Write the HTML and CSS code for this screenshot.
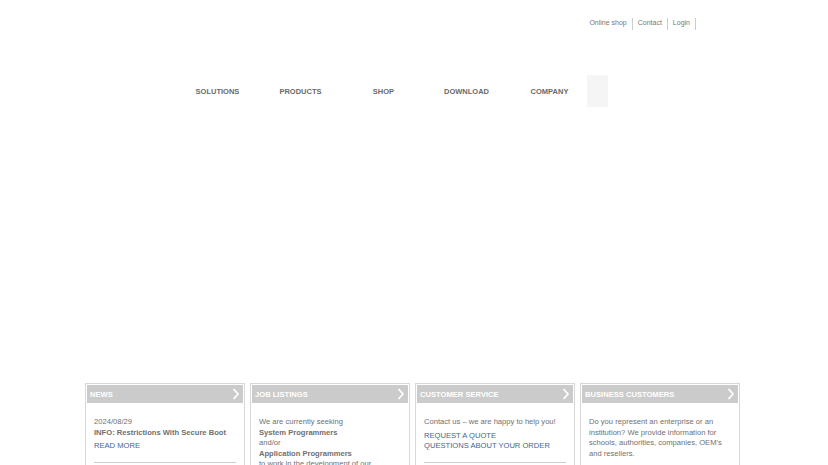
FILE: index.html
```html
<!DOCTYPE html>
<html lang="en">
<head>
    <meta charset="UTF-8">
    <meta name="viewport" content="width=device-width, initial-scale=1.0">
    <title>Home</title>
    <link rel="stylesheet" href="styles.css">
</head>
<body>
    <div class="page">
        <div class="toplinks">
            <a href="#">Online shop</a>
            <a href="#">Contact</a>
            <a href="#">Login</a>
        </div>

        <nav class="mainnav">
            <a href="#">SOLUTIONS</a>
            <a href="#">PRODUCTS</a>
            <a href="#">SHOP</a>
            <a href="#">DOWNLOAD</a>
            <a href="#">COMPANY</a>
            <div class="searchbox"></div>
        </nav>

        <div class="hero"></div>

        <div class="boxes">
            <div class="box">
                <div class="box-head">NEWS
                    <svg class="chev" width="8" height="12" viewBox="0 0 8 12"><polyline points="1.5,1 6,6 1.5,11" fill="none" stroke="#fff" stroke-width="1.8"/></svg>
                </div>
                <div class="box-body">
                    <p>2024/08/29</p>
                    <p class="strong">INFO: Restrictions With Secure Boot</p>
                    <p class="more"><a href="#">READ MORE</a></p>
                    <hr>
                </div>
            </div>
            <div class="box">
                <div class="box-head">JOB LISTINGS
                    <svg class="chev" width="8" height="12" viewBox="0 0 8 12"><polyline points="1.5,1 6,6 1.5,11" fill="none" stroke="#fff" stroke-width="1.8"/></svg>
                </div>
                <div class="box-body">
                    <p>We are currently seeking</p>
                    <p class="strong">System Programmers</p>
                    <p>and/or</p>
                    <p class="strong">Application Programmers</p>
                    <p>to work in the development of our</p>
                </div>
            </div>
            <div class="box">
                <div class="box-head">CUSTOMER SERVICE
                    <svg class="chev" width="8" height="12" viewBox="0 0 8 12"><polyline points="1.5,1 6,6 1.5,11" fill="none" stroke="#fff" stroke-width="1.8"/></svg>
                </div>
                <div class="box-body">
                    <p>Contact us &ndash; we are happy to help you!</p>
                    <p class="links"><a href="#">REQUEST A QUOTE</a><br><a href="#">QUESTIONS ABOUT YOUR ORDER</a></p>
                    <hr>
                </div>
            </div>
            <div class="box">
                <div class="box-head">BUSINESS CUSTOMERS
                    <svg class="chev" width="8" height="12" viewBox="0 0 8 12"><polyline points="1.5,1 6,6 1.5,11" fill="none" stroke="#fff" stroke-width="1.8"/></svg>
                </div>
                <div class="box-body">
                    <p>Do you represent an enterprise or an institution? We provide information for schools, authorities, companies, OEM's and resellers.</p>
                </div>
            </div>
        </div>
    </div>
</body>
</html>
```

FILE: styles.css
```css
body {
    font-family: "Liberation Sans", Arial, sans-serif;
    margin: 0;
    background: #fff;
    color: #707070;
    overflow: hidden;
}
a {
    text-decoration: none;
}
.page {
    width: 655px;
    margin-left: 85px;
}
.toplinks {
    display: flex;
    justify-content: flex-end;
    padding: 18px 44px 0 0;
    height: 12px;
    font-size: 7px;
    line-height: 10px;
}
.toplinks a {
    color: #777;
    padding: 0 5px;
    border-right: 1px solid #ccc;
}
.mainnav {
    display: flex;
    align-items: center;
    margin: 45px 0 0 91px;
    height: 32px;
}
.mainnav a {
    width: 83px;
    text-align: center;
    font-size: 7.5px;
    font-weight: bold;
    color: #6a6a6a;
}
.searchbox {
    width: 21px;
    height: 32px;
    margin-left: -4px;
    background: #f5f5f5;
}
.hero {
    height: 276px;
}
.boxes {
    display: grid;
    grid-template-columns: repeat(4, 160px);
    gap: 5px;
}
.box {
    border: 1px solid #d8d8d8;
    border-bottom: none;
    padding: 1px 1px 0;
    height: 90px;
    overflow: hidden;
}
.box-head {
    position: relative;
    height: 18px;
    line-height: 19px;
    background: #cbcbcb;
    color: #fff;
    font-size: 7.6px;
    font-weight: bold;
    padding-left: 3px;
}
.chev {
    position: absolute;
    right: 3px;
    top: 3px;
}
.box-body {
    padding: 14px 7px 0 7px;
    font-size: 7.6px;
    line-height: 10.5px;
}
.box-body p {
    margin: 0;
}
.strong {
    font-weight: bold;
}
.more {
    margin-top: 3px !important;
}
.links {
    margin-top: 3px !important;
}
.box-body a {
    color: #42659a;
}
.box-body hr {
    border: none;
    border-top: 1px solid #ccc;
    margin: 10px 0 0;
}
```
